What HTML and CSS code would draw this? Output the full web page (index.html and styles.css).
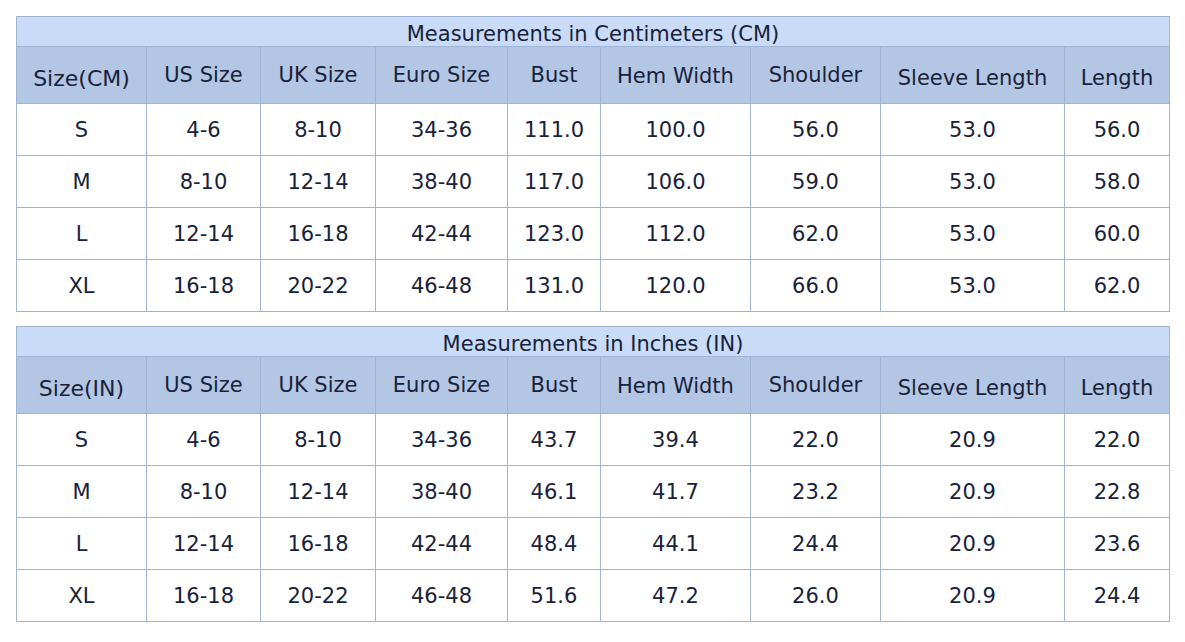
FILE: index.html
```html
<!DOCTYPE html>
<html lang="en">
<head>
<meta charset="utf-8">
<title>Size Chart</title>
<link rel="stylesheet" href="styles.css">
</head>
<body>
<table class="chart">
  <colgroup>
    <col class="c1"><col class="c2"><col class="c3"><col class="c4"><col class="c5"><col class="c6"><col class="c7"><col class="c8"><col class="c9">
  </colgroup>
  <thead>
    <tr class="title-row"><th colspan="9" class="title">Measurements in Centimeters (CM)</th></tr>
    <tr class="head-row">
      <th class="low">Size(CM)</th>
      <th>US Size</th>
      <th>UK Size</th>
      <th>Euro Size</th>
      <th>Bust</th>
      <th class="mid">Hem Width</th>
      <th>Shoulder</th>
      <th class="low2">Sleeve Length</th>
      <th class="low2">Length</th>
    </tr>
  </thead>
  <tbody>
    <tr><td>S</td><td>4-6</td><td>8-10</td><td>34-36</td><td>111.0</td><td>100.0</td><td>56.0</td><td>53.0</td><td>56.0</td></tr>
    <tr><td>M</td><td>8-10</td><td>12-14</td><td>38-40</td><td>117.0</td><td>106.0</td><td>59.0</td><td>53.0</td><td>58.0</td></tr>
    <tr><td>L</td><td>12-14</td><td>16-18</td><td>42-44</td><td>123.0</td><td>112.0</td><td>62.0</td><td>53.0</td><td>60.0</td></tr>
    <tr><td>XL</td><td>16-18</td><td>20-22</td><td>46-48</td><td>131.0</td><td>120.0</td><td>66.0</td><td>53.0</td><td>62.0</td></tr>
  </tbody>
</table>

<table class="chart">
  <colgroup>
    <col class="c1"><col class="c2"><col class="c3"><col class="c4"><col class="c5"><col class="c6"><col class="c7"><col class="c8"><col class="c9">
  </colgroup>
  <thead>
    <tr class="title-row"><th colspan="9" class="title">Measurements in Inches (IN)</th></tr>
    <tr class="head-row">
      <th class="low">Size(IN)</th>
      <th>US Size</th>
      <th>UK Size</th>
      <th>Euro Size</th>
      <th>Bust</th>
      <th class="mid">Hem Width</th>
      <th>Shoulder</th>
      <th class="low2">Sleeve Length</th>
      <th class="low2">Length</th>
    </tr>
  </thead>
  <tbody>
    <tr><td>S</td><td>4-6</td><td>8-10</td><td>34-36</td><td>43.7</td><td>39.4</td><td>22.0</td><td>20.9</td><td>22.0</td></tr>
    <tr><td>M</td><td>8-10</td><td>12-14</td><td>38-40</td><td>46.1</td><td>41.7</td><td>23.2</td><td>20.9</td><td>22.8</td></tr>
    <tr><td>L</td><td>12-14</td><td>16-18</td><td>42-44</td><td>48.4</td><td>44.1</td><td>24.4</td><td>20.9</td><td>23.6</td></tr>
    <tr><td>XL</td><td>16-18</td><td>20-22</td><td>46-48</td><td>51.6</td><td>47.2</td><td>26.0</td><td>20.9</td><td>24.4</td></tr>
  </tbody>
</table>
</body>
</html>
```
FILE: styles.css
```css
html, body {
  margin: 0;
  background: #ffffff;
}
body {
  padding: 16px;
  font-family: "DejaVu Sans", Verdana, sans-serif;
  color: #18223a;
}
.chart {
  border-collapse: collapse;
  table-layout: fixed;
  width: 1154px;
  margin: 0 0 14px 0;
}
.c1 { width: 130px; }
.c2 { width: 114px; }
.c3 { width: 115px; }
.c4 { width: 132px; }
.c5 { width: 93px; }
.c6 { width: 150px; }
.c7 { width: 130px; }
.c8 { width: 184px; }
.c9 { width: 105px; }
.chart th,
.chart td {
  border: 1px solid #a0b3d2;
  padding: 0;
  text-align: center;
  vertical-align: middle;
  font-weight: normal;
  font-size: 21px;
  white-space: nowrap;
}
.title-row { height: 30px; }
.chart th.title {
  background: #c9dbf6;
  font-size: 21px;
  padding-top: 4px;
}
.head-row { height: 57px; }
.head-row th { background: #b3c6e4; }
.head-row th.low { padding-top: 7px; font-size: 22px; }
.head-row th.low2 { padding-top: 5px; }
.head-row th.mid { padding-top: 1px; }
.chart tbody tr { height: 52px; }
```
